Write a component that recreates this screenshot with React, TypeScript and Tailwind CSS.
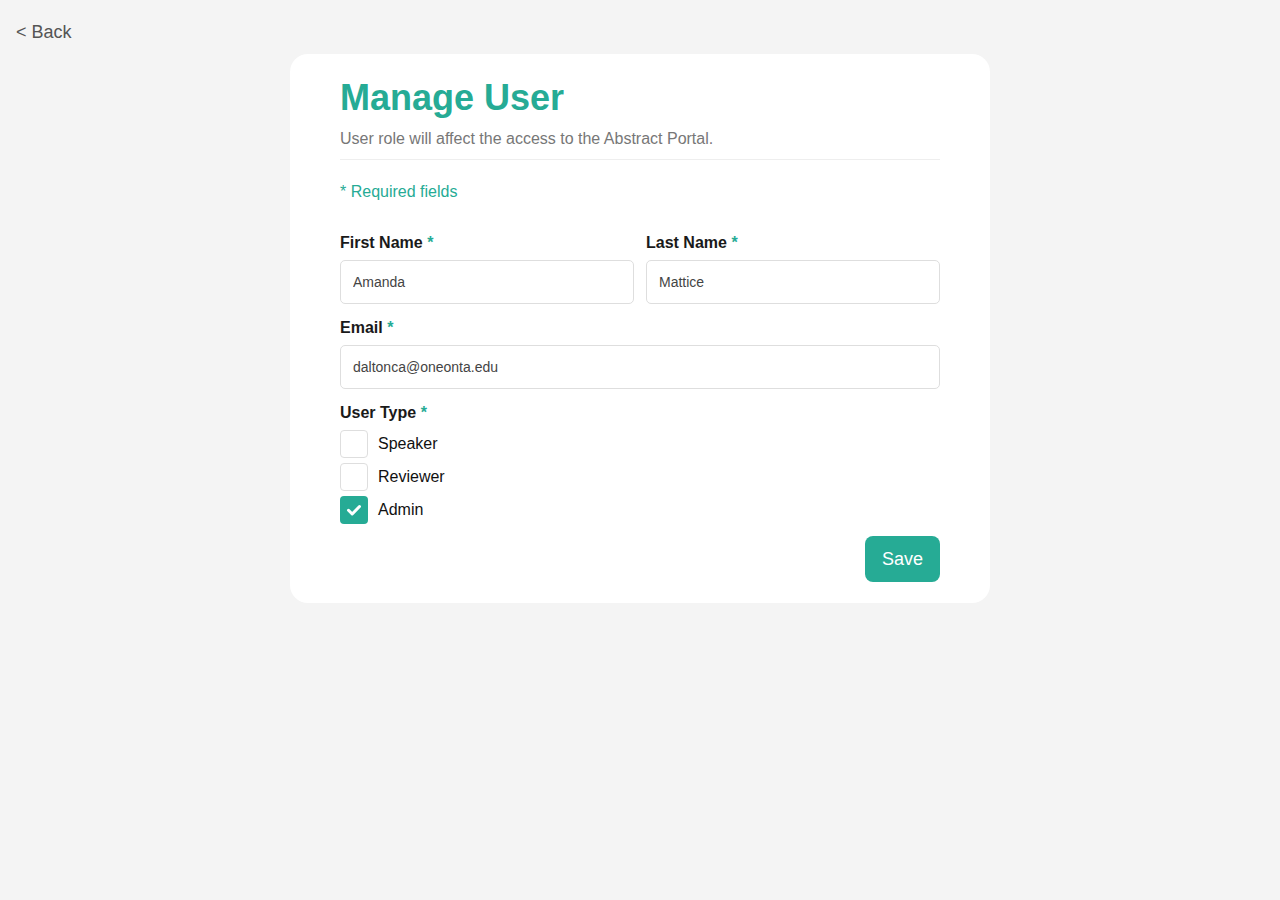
import React from "react";

const font = { fontFamily: '"Liberation Sans", Arial, Helvetica, sans-serif' };

function Label({ children }: { children: React.ReactNode }) {
  return (
    <div className="text-[16px] leading-[20px] font-bold text-[#1a1a1a]">
      {children} <span className="text-[#26ab95]">*</span>
    </div>
  );
}

function Input({ value }: { value: string }) {
  return (
    <input
      readOnly
      value={value}
      className="w-full h-[44px] rounded-[5px] border border-[#dedede] bg-white px-[12px] text-[14px] text-[#444] outline-none"
      style={font}
    />
  );
}

function Check({ label, checked }: { label: string; checked?: boolean }) {
  return (
    <div className="flex items-center gap-[10px] h-[28px]">
      {checked ? (
        <div className="w-[28px] h-[28px] rounded-[4px] bg-[#26ab95] flex items-center justify-center">
          <svg width="16" height="16" viewBox="0 0 16 16">
            <path d="M2.5 8.3 L6.2 12 L13.5 4.5" fill="none" stroke="white" strokeWidth="3" strokeLinecap="round" strokeLinejoin="round" />
          </svg>
        </div>
      ) : (
        <div className="w-[28px] h-[28px] rounded-[4px] border border-[#dedede] bg-white" />
      )}
      <span className="text-[16px] text-[#111]">{label}</span>
    </div>
  );
}

export default function App() {
  return (
    <div className="min-h-[900px] bg-[#f4f4f4]" style={font}>
      <div className="pl-[16px] pt-[21px] h-[54px] text-[18px] leading-[22px] text-[#555]">&lt; Back</div>
      <div className="flex justify-center">
        <div className="w-[700px] bg-white rounded-[18px] px-[50px] pt-[22px] pb-[21px]">
          <h1 className="text-[36px] leading-[44px] font-bold text-[#26ab95]">Manage User</h1>
          <p className="mt-[10px] text-[16px] leading-[18px] text-[#777] pb-[11px] border-b border-[#eeeeee]">
            User role will affect the access to the Abstract Portal.
          </p>
          <p className="mt-[22px] text-[16px] leading-[20px] text-[#26ab95]">* Required fields</p>
          <div className="mt-[31px] grid grid-cols-2 gap-x-[12px]">
            <div>
              <Label>First Name</Label>
              <div className="mt-[7px]"><Input value="Amanda" /></div>
            </div>
            <div>
              <Label>Last Name</Label>
              <div className="mt-[7px]"><Input value="Mattice" /></div>
            </div>
          </div>
          <div className="mt-[14px]">
            <Label>Email</Label>
            <div className="mt-[7px]"><Input value="daltonca@oneonta.edu" /></div>
          </div>
          <div className="mt-[14px]">
            <Label>User Type</Label>
            <div className="mt-[7px] flex flex-col gap-[5px]">
              <Check label="Speaker" />
              <Check label="Reviewer" />
              <Check label="Admin" checked />
            </div>
          </div>
          <div className="mt-[12px] flex justify-end">
            <button className="w-[75px] h-[46px] rounded-[8px] bg-[#26ab95] text-white text-[18px]" style={font}>
              Save
            </button>
          </div>
        </div>
      </div>
    </div>
  );
}
